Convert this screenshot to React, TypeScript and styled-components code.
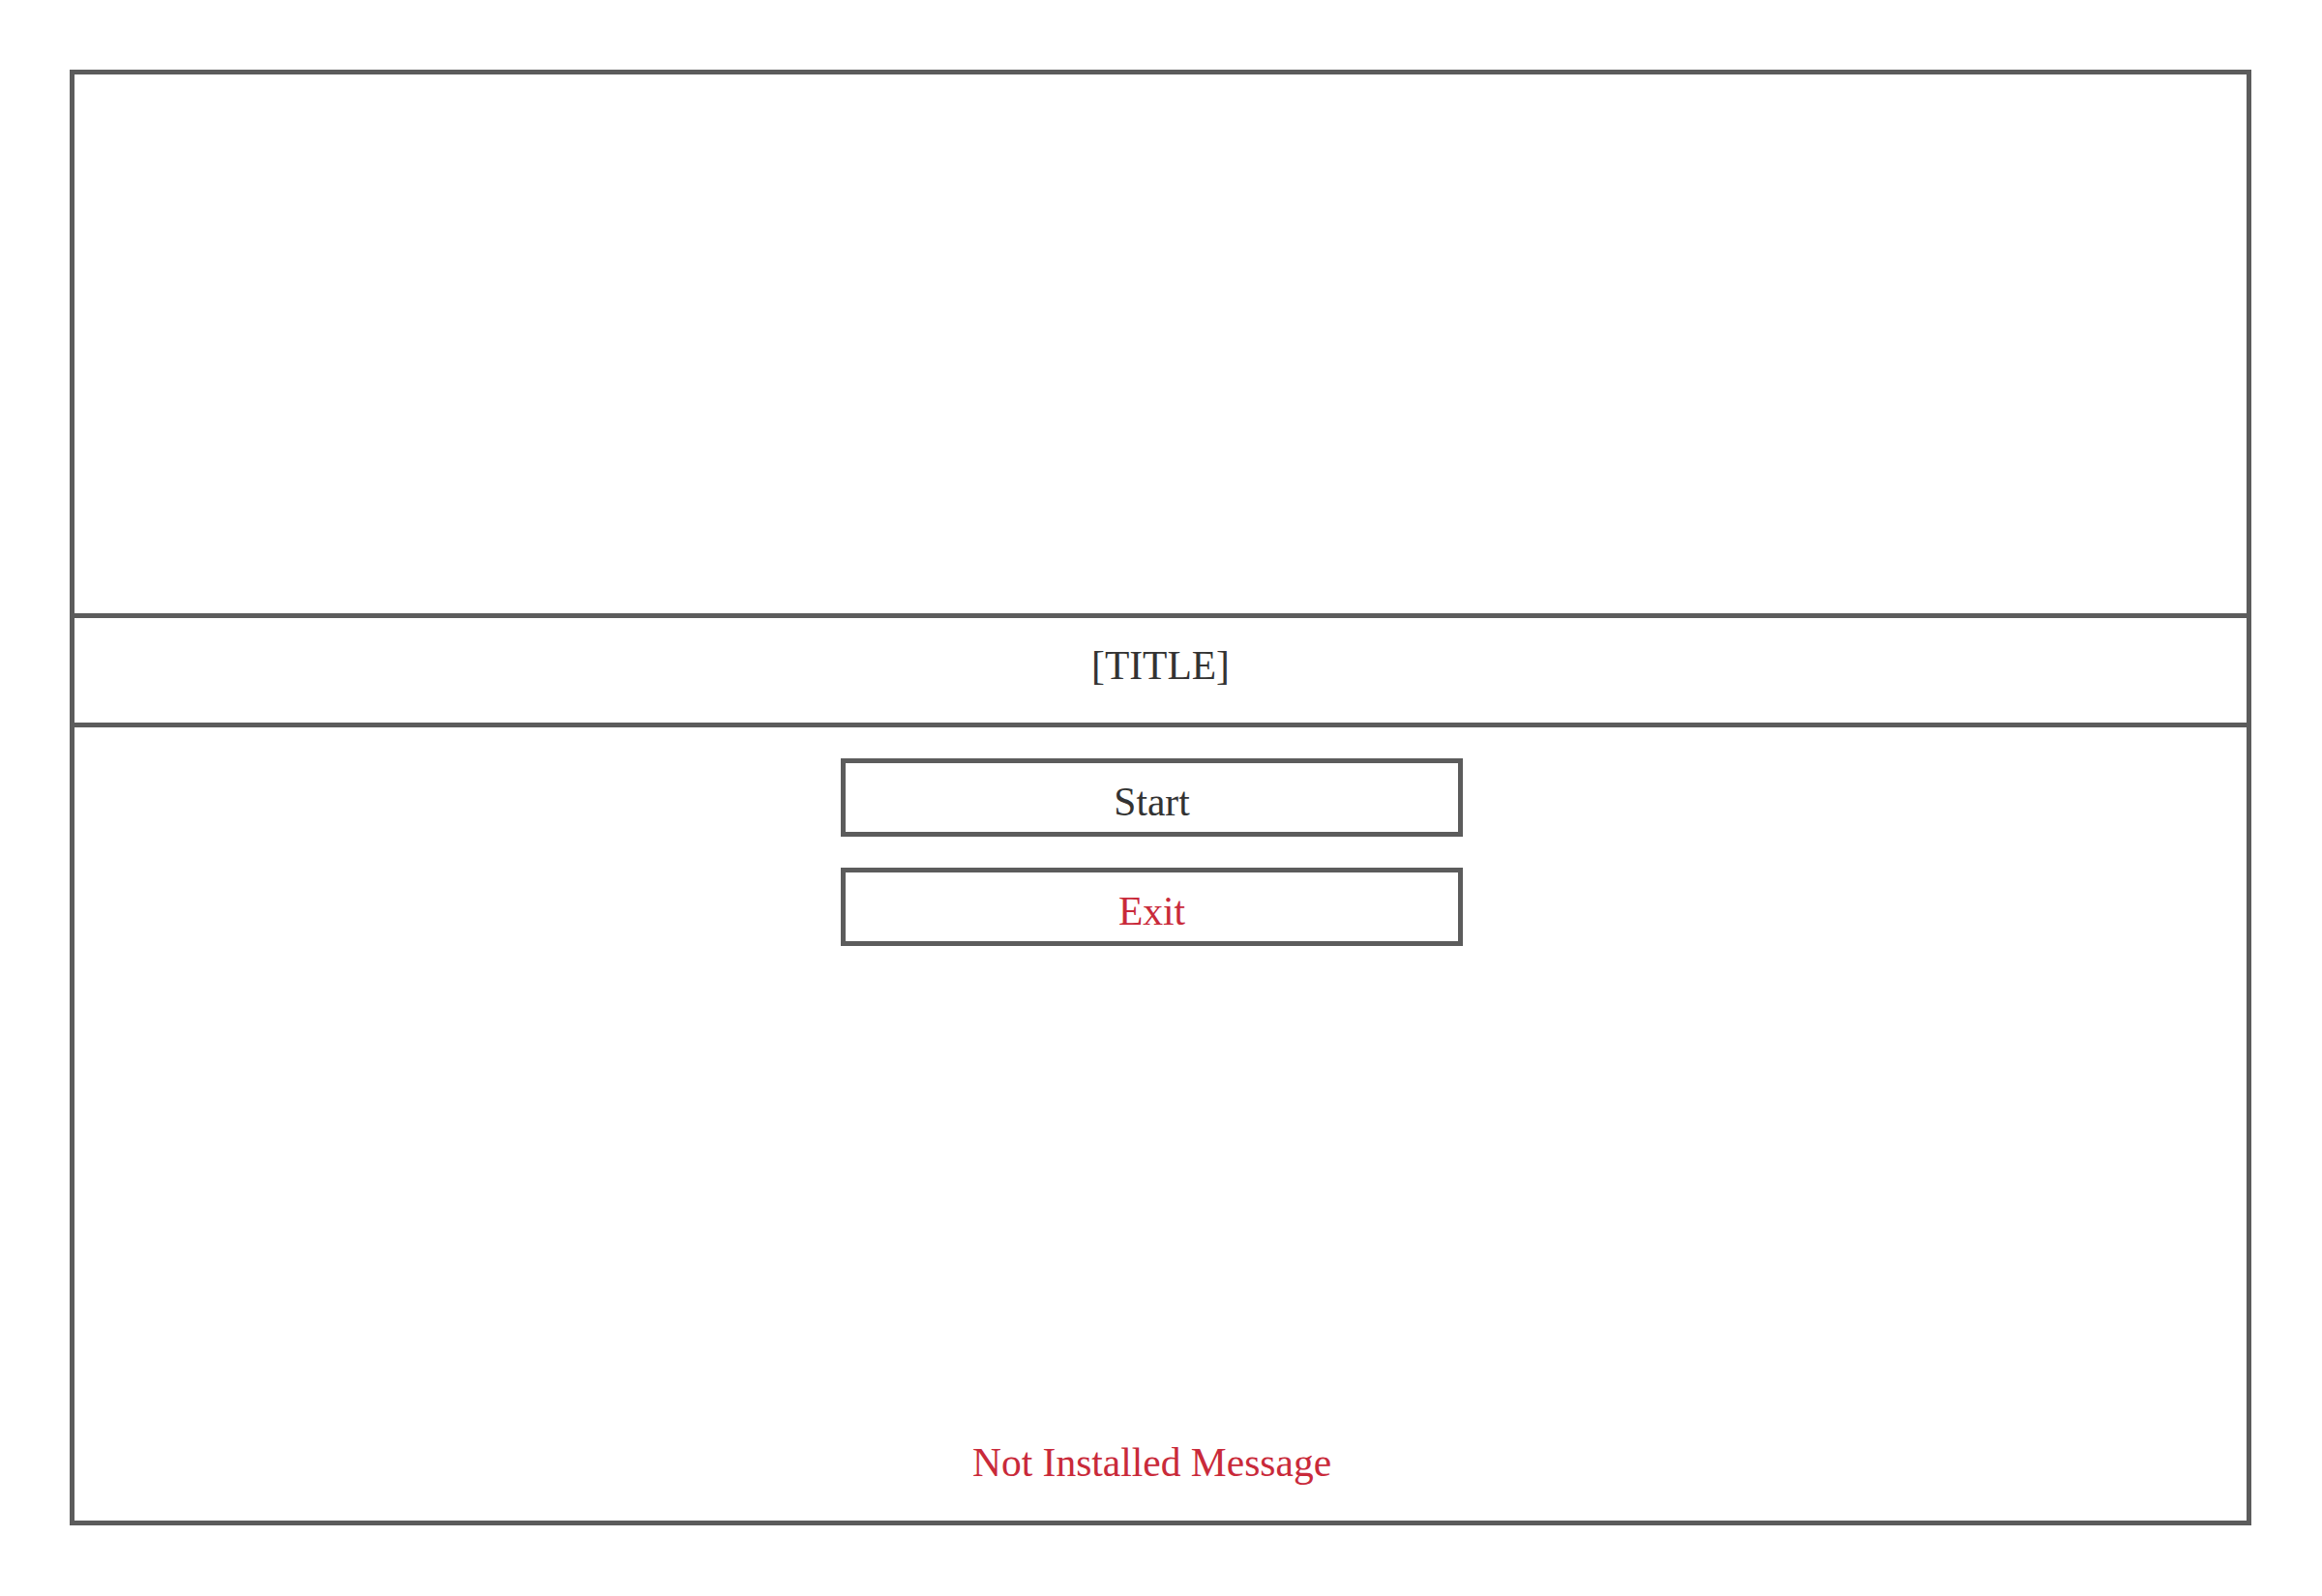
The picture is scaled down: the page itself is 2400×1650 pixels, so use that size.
import React from 'react';
import styled, { createGlobalStyle } from 'styled-components';

const GlobalStyle = createGlobalStyle`
    html, body {
        margin: 0;
        padding: 0;
        background: #ffffff;
    }

    * {
        box-sizing: border-box;
    }
`;

const Frame = styled.div`
    margin: 72px 73px 73px 72px;
    height: calc(100vh - 145px);
    border: 5px solid #5c5c5c;
    display: flex;
    flex-direction: column;
    font-family: 'Liberation Serif', 'Times New Roman', serif;
`;

const Banner = styled.div`
    height: 562px;
    flex-shrink: 0;
    border-bottom: 5px solid #5c5c5c;
`;

const TitleBar = styled.div`
    height: 113px;
    flex-shrink: 0;
    border-bottom: 5px solid #5c5c5c;
    display: flex;
    align-items: center;
    justify-content: center;
    padding-bottom: 10px;
`;

const Title = styled.h1`
    margin: 0;
    font-size: 41.5px;
    font-weight: normal;
    color: #333333;
`;

const Menu = styled.div`
    flex: 1;
    display: flex;
    flex-direction: column;
    align-items: center;
    gap: 32px;
    padding: 32px 18px 36px 0;
`;

const MenuButton = styled.button<{ $danger?: boolean }>`
    width: 643px;
    height: 81px;
    border: 5px solid #5c5c5c;
    border-radius: 0;
    background: #ffffff;
    padding: 9px 0 0;
    font-family: inherit;
    font-size: 41.5px;
    color: ${(p) => (p.$danger ? '#c92a3a' : '#333333')};
    cursor: pointer;
`;

const Message = styled.p`
    margin: auto 0 0;
    font-size: 41.5px;
    color: #c92a3a;
`;

function App() {
    return (
        <>
            <GlobalStyle />
            <Frame>
                <Banner />
                <TitleBar>
                    <Title>[TITLE]</Title>
                </TitleBar>
                <Menu>
                    <MenuButton>Start</MenuButton>
                    <MenuButton $danger>Exit</MenuButton>
                    <Message>Not Installed Message</Message>
                </Menu>
            </Frame>
        </>
    );
}

export default App;
